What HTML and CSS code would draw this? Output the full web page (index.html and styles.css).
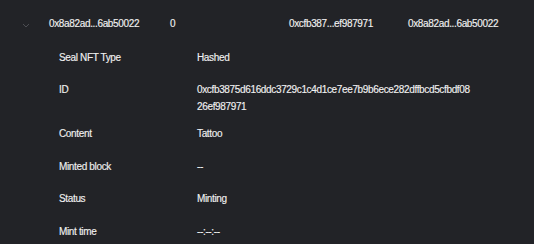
FILE: index.html
```html
<!DOCTYPE html>
<html>
<head>
<meta charset="utf-8">
<link rel="stylesheet" href="styles.css">
</head>
<body>
<div class="panel">
  <div class="summary">
    <div class="toggle">
      <svg width="8" height="5" viewBox="0 0 8 5"><path d="M1 1 L4 4 L7 1" fill="none" stroke="#4c4d52" stroke-width="1"/></svg>
    </div>
    <div class="cell c1">0x8a82ad...6ab50022</div>
    <div class="cell c2">0</div>
    <div class="cell c3">0xcfb387...ef987971</div>
    <div class="cell c4">0x8a82ad...6ab50022</div>
  </div>
  <div class="details">
    <div class="row"><div class="label">Seal NFT Type</div><div class="value">Hashed</div></div>
    <div class="row"><div class="label">ID</div><div class="value wrap">0xcfb3875d616ddc3729c1c4d1ce7ee7b9b6ece282dffbcd5cfbdf0826ef987971</div></div>
    <div class="row"><div class="label">Content</div><div class="value">Tattoo</div></div>
    <div class="row"><div class="label">Minted block</div><div class="value">--</div></div>
    <div class="row"><div class="label">Status</div><div class="value">Minting</div></div>
    <div class="row"><div class="label">Mint time</div><div class="value">--:--:--</div></div>
  </div>
</div>
</body>
</html>
```

FILE: styles.css
```css
html, body {
  margin: 0;
  padding: 0;
  background: #222327;
}
body {
  width: 534px;
  height: 244px;
  overflow: hidden;
  font-family: "Liberation Sans", Arial, sans-serif;
  font-size: 10px;
  letter-spacing: -0.35px;
  color: #f0f0f0;
  -webkit-text-stroke: 0.15px #f0f0f0;
}
.summary {
  display: grid;
  grid-template-columns: 49px 121px 119px 119px 1fr;
  align-items: center;
  align-content: start;
  height: 43.5px;
  padding-top: 16px;
  box-sizing: border-box;
  line-height: 16px;
}
.toggle {
  display: flex;
  justify-content: center;
  padding-left: 2px;
  padding-top: 3px;
}
.toggle svg { display: block; }
.details {
  display: flex;
  flex-direction: column;
}
.row {
  display: flex;
  align-items: flex-start;
  min-height: 32.5px;
  padding: 5px 0;
  box-sizing: border-box;
  line-height: 17px;
}
.label {
  width: 197px;
  padding-left: 59px;
  box-sizing: border-box;
  flex: none;
}
.value {
  flex: none;
}
.wrap {
  width: 275px;
  word-break: break-all;
}
```
